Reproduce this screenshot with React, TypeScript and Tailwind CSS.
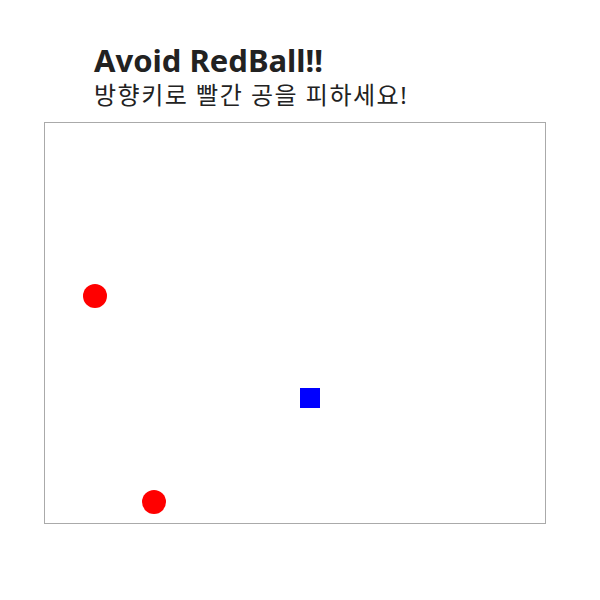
const balls = [
  { x: 38, y: 161 },
  { x: 97, y: 367 },
];

export default function App() {
  return (
    <div className="w-[600px] h-[600px] bg-white pl-[44px] pt-[40px] font-['Noto_Sans','Noto_Sans_CJK_KR',sans-serif] text-[#222]">
      <div className="pl-[50px]">
        <h1 className="text-[31px] font-bold leading-[40px]">Avoid RedBall!!</h1>
        <p className="text-[24px] leading-[32px] -mt-[1px] tracking-[1.5px]">방향키로 빨간 공을 피하세요!</p>
      </div>
      <div className="relative w-[502px] h-[402px] border border-[#aaa] mt-[11px]">
        {balls.map((b, i) => (
          <div
            key={i}
            className="absolute w-[24px] h-[24px] rounded-full bg-[#ff0000]"
            style={{ left: b.x, top: b.y }}
          />
        ))}
        <div className="absolute left-[255px] top-[265px] w-[20px] h-[20px] bg-[#0000ff]" />
      </div>
    </div>
  );
}
